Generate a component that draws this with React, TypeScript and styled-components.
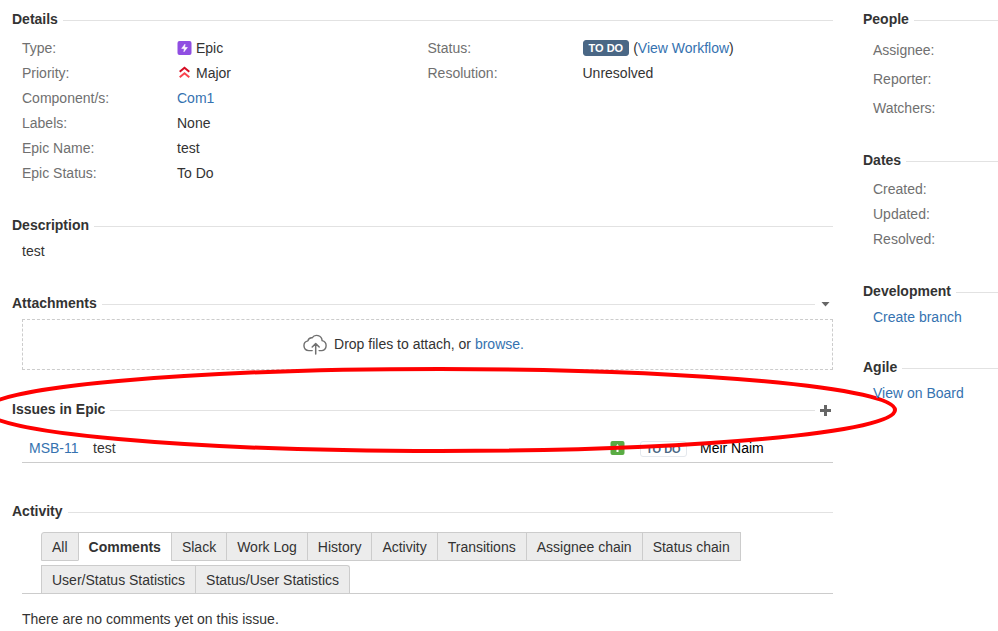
import React from "react";
import styled, { createGlobalStyle } from "styled-components";

const GlobalStyle = createGlobalStyle`
  *, *::before, *::after { box-sizing: border-box; }
  body {
    margin: 0;
    background: #fff;
    color: #333;
    font: 14px/20px "Liberation Sans", Arial, sans-serif;
    overflow-x: hidden;
  }
`;

const Page = styled.div`
  display: grid;
  grid-template-columns: minmax(0, 1fr) 135px;
  column-gap: 30px;
  padding: 9px 0 0 12px;
`;

const Column = styled.div`
  min-width: 0;
`;

const Section = styled.section<{ $space?: number }>`
  position: relative;
  margin-bottom: ${(p) => p.$space ?? 0}px;
`;

const HeadingRow = styled.header`
  display: flex;
  align-items: center;
  gap: 3px;
`;

const Title = styled.h2`
  flex: 1;
  display: flex;
  align-items: center;
  gap: 5px;
  margin: 0;
  font-size: 14px;
  line-height: 20px;
  white-space: nowrap;

  &::after {
    content: "";
    flex: 1;
    height: 1px;
    margin-top: 3px;
    background: #e2e2e2;
  }
`;

const IconButton = styled.button`
  display: flex;
  align-items: center;
  justify-content: center;
  width: 15px;
  height: 20px;
  padding: 3px 0 0;
  border: 0;
  background: none;
  color: #666;
  cursor: pointer;
`;

const Link = styled.a`
  color: #3572b0;
  text-decoration: none;
  &:hover { text-decoration: underline; }
`;

const Body = styled.div`
  padding: 6px 0 0 10px;
`;

const DetailColumns = styled(Body)`
  display: grid;
  grid-template-columns: 1fr 1fr;
`;

const Facts = styled.dl`
  display: grid;
  grid-template-columns: 155px 1fr;
  grid-auto-rows: 25px;
  align-content: start;
  align-items: center;
  margin: 0;
`;

const Term = styled.dt`
  color: #707070;
`;

const Value = styled.dd`
  display: flex;
  align-items: center;
  gap: 4px;
  margin: 0;
`;

const Lozenge = styled.span<{ $subtle?: boolean }>`
  display: inline-block;
  padding: 0 5px;
  border: 1px solid ${(p) => (p.$subtle ? "#e4e8ed" : "#4a6785")};
  border-radius: 3px;
  background: ${(p) => (p.$subtle ? "#fff" : "#4a6785")};
  color: ${(p) => (p.$subtle ? "#4a6785" : "#fff")};
  font-size: 11px;
  font-weight: 700;
  line-height: 14px;
  text-align: center;
  white-space: nowrap;
`;

const DropZone = styled.div`
  display: flex;
  align-items: center;
  justify-content: center;
  gap: 6px;
  height: 51px;
  margin: 6px 0 0 10px;
  padding: 0 28px 1px 0;
  border: 1px dashed #ccc;
`;

const BrowseButton = styled.button`
  padding: 0;
  border: 0;
  background: none;
  color: #3572b0;
  font: inherit;
  cursor: pointer;
`;

const IssueTable = styled.table`
  width: calc(100% - 10px);
  margin: 16px 0 0 10px;
  border-collapse: collapse;
  border-bottom: 1px solid #ccc;
`;

const Cell = styled.td<{ $width?: number }>`
  width: ${(p) => (p.$width ? `${p.$width}px` : "auto")};
  height: 27px;
  padding: 0 0 0 7px;
  white-space: nowrap;
  color: #333;

  svg { display: block; }
`;

const Assignee = styled(Cell)`
  color: #000;
`;

const Highlight = styled.svg`
  position: absolute;
  left: -29px;
  top: -34px;
  width: calc(100% + 93px);
  height: 90px;
  overflow: visible;
  pointer-events: none;
`;

const Tabs = styled.div`
  display: flex;
  flex-wrap: wrap;
  row-gap: 4px;
  margin: 11px 0 0 10px;
  padding-left: 20px;
  border-bottom: 1px solid #ccc;
`;

const Tab = styled.button<{ $first?: boolean; $last?: boolean }>`
  height: 29px;
  margin: 0 0 0 -1px;
  padding: 2px 10px 0;
  border: 1px solid #ccc;
  border-top-left-radius: ${(p) => (p.$first ? 3 : 0)}px;
  border-top-right-radius: ${(p) => (p.$last ? 3 : 0)}px;
  background: #ececec;
  color: #333;
  font: inherit;
  cursor: pointer;

  &[aria-selected="true"] {
    background: #fff;
    border-bottom-color: #fff;
    font-weight: 700;
  }

  &:nth-last-child(-n + 2) {
    border-bottom: 0;
    height: 28px;
  }
`;

const Message = styled.p`
  margin: 15px 0 0 10px;
`;

const SideList = styled.ul<{ $row: number }>`
  margin: 0;
  padding: 7px 0 0 10px;
  list-style: none;
  color: #707070;
  line-height: ${(p) => p.$row}px;
`;

const EpicIcon = () => (
  <svg width="15" height="16" viewBox="0 0 15 16" aria-hidden="true">
    <rect x=".5" y="1" width="14" height="14" rx="2" fill="#904ee2" />
    <path d="M8 4.2 4.7 8.4h2.6l-.4 3.4 3.5-4.3H7.7z" fill="#fff" stroke="#fff" strokeWidth=".6" />
  </svg>
);

const MajorIcon = () => (
  <svg width="15" height="16" viewBox="0 0 15 16" fill="none" strokeWidth="2" aria-hidden="true">
    <path d="M2.7 6.8 7.5 2.8l4.8 4" stroke="#d50c22" />
    <path d="M2.7 12.2 7.5 8.2l4.8 4" stroke="#fa4550" />
  </svg>
);

const StoryIcon = () => (
  <svg width="15" height="16" viewBox="0 0 15 16" aria-hidden="true">
    <rect x=".5" y="1" width="14" height="14" rx="2" fill="#5aac44" />
    <path d="M7.5 4 5.5 7h1V12h2V7h1z" fill="#fff" />
  </svg>
);

const CloudIcon = () => (
  <svg width="25" height="21" viewBox="0 0 25 21" fill="none" stroke="#707070" strokeWidth="1.4" strokeLinecap="round" strokeLinejoin="round" aria-hidden="true">
    <path d="M9.2 16.6H5.8a4.9 4.9 0 0 1-.9-9.7 4 4 0 0 1 4.2-3.1 5.5 5.5 0 0 1 10 2.8 5.1 5.1 0 0 1-.2 10h-2.8" />
    <path d="M12.7 20V9.8M9.2 13l3.5-3.4 3.5 3.4" strokeWidth="1.5" />
  </svg>
);

const CaretIcon = () => (
  <svg width="9" height="5" viewBox="0 0 9 5" aria-hidden="true">
    <path d="M.5 0h8l-4 4.5z" fill="currentColor" />
  </svg>
);

const PlusIcon = () => (
  <svg width="11" height="11" viewBox="0 0 11 11" aria-hidden="true">
    <path d="M4 0h3v4h4v3H7v4H4V7H0V4h4z" fill="currentColor" />
  </svg>
);

const primaryFacts: [string, React.ReactNode][] = [
  ["Type:", <><EpicIcon />Epic</>],
  ["Priority:", <><MajorIcon />Major</>],
  ["Component/s:", <Link href="#component">Com1</Link>],
  ["Labels:", "None"],
  ["Epic Name:", "test"],
  ["Epic Status:", "To Do"],
];

const statusFacts: [string, React.ReactNode][] = [
  [
    "Status:",
    <>
      <Lozenge>TO DO</Lozenge>
      <span>(<Link href="#workflow">View Workflow</Link>)</span>
    </>,
  ],
  ["Resolution:", "Unresolved"],
];

const tabs = [
  "All", "Comments", "Slack", "Work Log", "History", "Activity", "Transitions",
  "Assignee chain", "Status chain", "User/Status Statistics", "Status/User Statistics",
];

const FactList = ({ items }: { items: [string, React.ReactNode][] }) => (
  <Facts>
    {items.map(([term, value]) => (
      <React.Fragment key={term}>
        <Term>{term}</Term>
        <Value>{value}</Value>
      </React.Fragment>
    ))}
  </Facts>
);

const Heading = ({ title, action }: { title: string; action?: React.ReactNode }) => (
  <HeadingRow>
    <Title>{title}</Title>
    {action}
  </HeadingRow>
);

export default function App() {
  const [selected, setSelected] = React.useState("Comments");
  return (
    <>
      <GlobalStyle />
      <Page>
        <Column as="main">
          <Section $space={30}>
            <Heading title="Details" />
            <DetailColumns>
              <FactList items={primaryFacts} />
              <FactList items={statusFacts} />
            </DetailColumns>
          </Section>
          <Section $space={32}>
            <Heading title="Description" />
            <Body>test</Body>
          </Section>
          <Section $space={29}>
            <Heading
              title="Attachments"
              action={<IconButton aria-label="Attachment options"><CaretIcon /></IconButton>}
            />
            <DropZone>
              <CloudIcon />
              <span>Drop files to attach, or <BrowseButton>browse.</BrowseButton></span>
            </DropZone>
          </Section>
          <Section $space={38}>
            <Heading
              title="Issues in Epic"
              action={<IconButton aria-label="Create issue in epic"><PlusIcon /></IconButton>}
            />
            <IssueTable>
              <tbody>
                <tr>
                  <Cell $width={64}><Link href="#MSB-11">MSB-11</Link></Cell>
                  <Cell>test</Cell>
                  <Cell $width={30}><StoryIcon /></Cell>
                  <Cell $width={60}><Lozenge $subtle>TO DO</Lozenge></Cell>
                  <Assignee $width={140}>Meir Naim</Assignee>
                </tr>
              </tbody>
            </IssueTable>
            <Highlight viewBox="0 0 914 90" preserveAspectRatio="none" aria-hidden="true">
              <ellipse cx="457" cy="45" rx="455" ry="41" fill="none" stroke="#f00" strokeWidth="4" vectorEffect="non-scaling-stroke" />
            </Highlight>
          </Section>
          <Section>
            <Heading title="Activity" />
            <Tabs role="tablist">
              {tabs.map((name, i) => (
                <Tab
                  key={name}
                  role="tab"
                  aria-selected={name === selected}
                  $first={i === 0}
                  $last={i === tabs.length - 1}
                  onClick={() => setSelected(name)}
                >
                  {name}
                </Tab>
              ))}
            </Tabs>
            <Message>There are no comments yet on this issue.</Message>
          </Section>
        </Column>
        <Column as="aside">
          <Section $space={27}>
            <Heading title="People" />
            <SideList $row={29}>
              <li>Assignee:</li>
              <li>Reporter:</li>
              <li>Watchers:</li>
            </SideList>
          </Section>
          <Section $space={29}>
            <Heading title="Dates" />
            <SideList $row={25}>
              <li>Created:</li>
              <li>Updated:</li>
              <li>Resolved:</li>
            </SideList>
          </Section>
          <Section $space={30}>
            <Heading title="Development" />
            <Body><Link href="#branch">Create branch</Link></Body>
          </Section>
          <Section>
            <Heading title="Agile" />
            <Body><Link href="#board">View on Board</Link></Body>
          </Section>
        </Column>
      </Page>
    </>
  );
}
